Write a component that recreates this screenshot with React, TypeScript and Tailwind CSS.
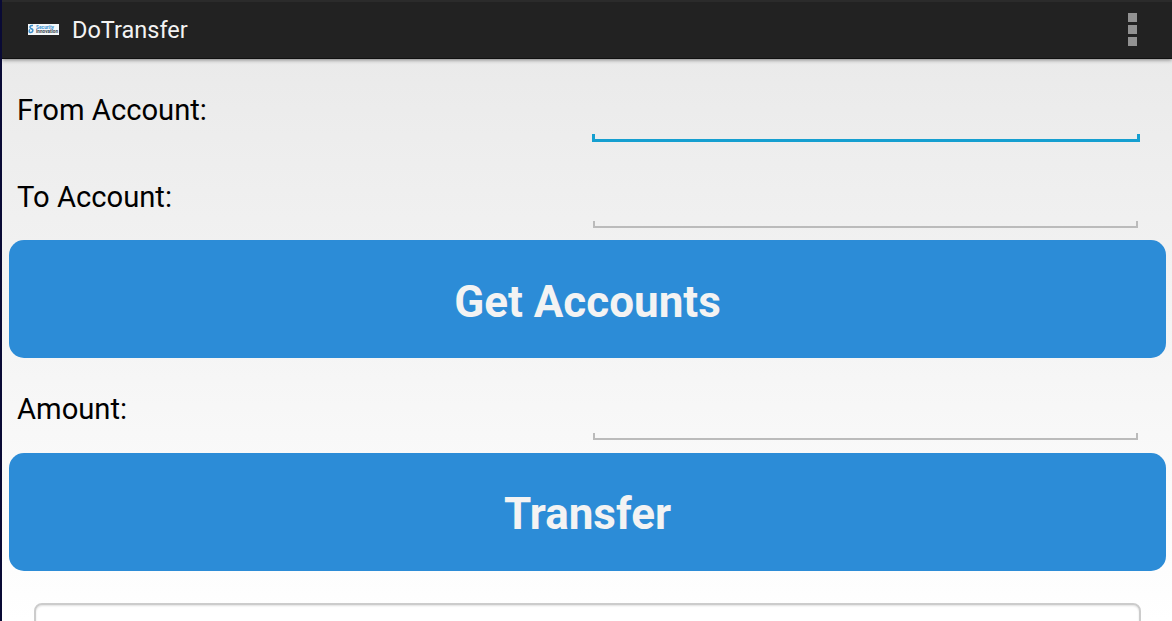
import React from 'react';

interface FieldProps {
  label: string;
  className: string;
  focused?: boolean;
}

const Logo: React.FC = () => (
  <svg width="31" height="11" viewBox="0 0 31 11" className="mb-[2px] shrink-0">
    <rect width="31" height="11" fill="#f5f8fa" />
    <path d="M5 1.5C2 1 1 3.5 3 4.5C6 5.5 5 9 2 8.5C.8 8 .8 6 2.2 5.4" fill="none" stroke="#3d8fcb" strokeWidth="1.5" />
    <text x="8" y="4.8" textLength="18" lengthAdjust="spacingAndGlyphs" fontSize="5" fontWeight="700" fill="#3f93d3">Security</text>
    <text x="8" y="8.6" textLength="22" lengthAdjust="spacingAndGlyphs" fontSize="4.6" fontWeight="700" fill="#3a4550">Innovation</text>
  </svg>
);

const Field: React.FC<FieldProps> = ({ label, className, focused }) => (
  <label className={`flex items-start justify-between pl-[15px] text-[29.2px] leading-[34px] text-black ${className}`}>
    <span>{label}</span>
    {focused ? (
      <span className="mt-[41px] mr-[32px] h-[8px] w-[548px] border-x-[3px] border-b-[3px] border-[#159fd0]" />
    ) : (
      <span className="mt-[41px] mr-[34px] h-[7px] w-[545px] border-x-2 border-b-2 border-[#bbbbbb]" />
    )}
  </label>
);

const Button: React.FC<{ className: string; children: React.ReactNode }> = ({ className, children }) => (
  <button className={`mr-[6px] ml-[7px] flex h-[118px] shrink-0 items-center justify-center rounded-[15px] bg-[#2c8cd7] text-[44px] font-bold text-[#f3f3f3] ${className}`}>
    {children}
  </button>
);

export default function App() {
  return (
    <div className="flex h-[621px] w-[1172px] flex-col overflow-hidden border-l-2 border-[#090a35] bg-linear-to-b from-[#e8e8e8] to-white font-[Roboto,sans-serif]">
      <header className="flex h-[59px] shrink-0 items-center border-t-2 border-b border-t-[#2b2b2b] border-b-[#111111] bg-[#222222] pr-[35px] pl-[26px] shadow-[0_1px_4px_rgba(0,0,0,0.45)]">
        <Logo />
        <h1 className="ml-[13px] text-[23.5px] leading-[30px] text-[#f3f3f3]">DoTransfer</h1>
        <button aria-label="More options" className="mb-[2px] ml-auto flex flex-col gap-[3px]">
          <span className="size-[9px] bg-[#929292]" />
          <span className="size-[9px] bg-[#929292]" />
          <span className="size-[9px] bg-[#929292]" />
        </button>
      </header>
      <main className="flex flex-1 flex-col">
        <Field label="From Account:" className="h-[88px] pt-[34px]" focused />
        <Field label="To Account:" className="h-[93px] pt-[33px]" />
        <Button className="pt-[5px]">Get Accounts</Button>
        <Field label="Amount:" className="h-[95px] pt-[34px]" />
        <Button className="pt-[4px]">Transfer</Button>
        <div className="mt-[32px] mr-[31px] ml-[32px] h-[40px] shrink-0 rounded-[8px] border-2 border-[#cccccc] bg-white shadow-[inset_0_1px_2px_rgba(0,0,0,0.12)]" />
      </main>
    </div>
  );
}
